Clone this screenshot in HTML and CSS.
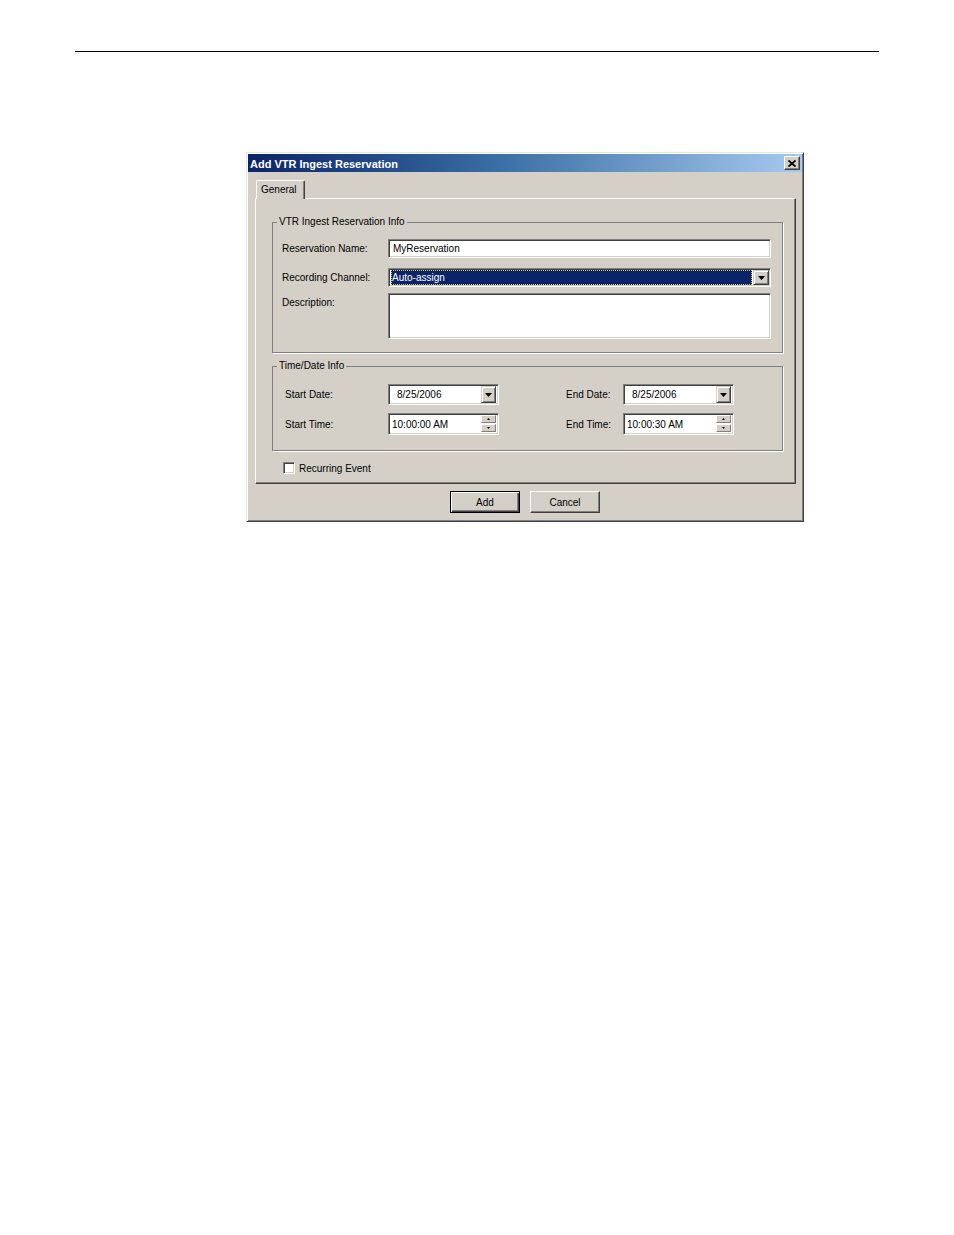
FILE: index.html
```html
<!DOCTYPE html>
<html>
<head>
<meta charset="utf-8">
<title>Add VTR Ingest Reservation</title>
<link rel="stylesheet" href="styles.css">
</head>
<body>
<div class="page">
  <div class="rule"></div>
  <div class="dialog">
    <div class="titlebar">
      <span class="title">Add VTR Ingest Reservation</span>
      <span class="close-btn"><svg width="8" height="7" viewBox="0 0 8 7"><path d="M0.5 0.5L7.5 6.5M7.5 0.5L0.5 6.5" stroke="#000" stroke-width="1.7" fill="none"/></svg></span>
    </div>
    <div class="tabs"><div class="tab">General</div></div>
    <div class="panel">
      <fieldset class="group g1">
        <legend>VTR Ingest Reservation Info</legend>
        <div class="group-body g1-body">
          <div class="row r1">
            <span class="lbl">Reservation Name:</span>
            <div class="field wide"><span class="val">MyReservation</span></div>
          </div>
          <div class="row r2">
            <span class="lbl">Recording Channel:</span>
            <div class="field wide combo">
              <span class="sel">Auto-assign</span>
              <span class="dd-btn"><svg width="7" height="4" viewBox="0 0 7 4"><path d="M0 0H7L3.5 4Z" fill="#000"/></svg></span>
            </div>
          </div>
          <div class="row r3">
            <span class="lbl">Description:</span>
            <div class="field wide area"></div>
          </div>
        </div>
      </fieldset>
      <fieldset class="group g2">
        <legend>Time/Date Info</legend>
        <div class="group-body g2-body">
          <span class="lbl">Start Date:</span>
          <div class="field small date"><span class="val">8/25/2006</span><span class="dd-btn"><svg width="7" height="4" viewBox="0 0 7 4"><path d="M0 0H7L3.5 4Z" fill="#000"/></svg></span></div>
          <span></span>
          <span class="lbl">End Date:</span>
          <div class="field small date"><span class="val">8/25/2006</span><span class="dd-btn"><svg width="7" height="4" viewBox="0 0 7 4"><path d="M0 0H7L3.5 4Z" fill="#000"/></svg></span></div>

          <span class="lbl">Start Time:</span>
          <div class="field small time"><span class="val">10:00:00 AM</span><span class="spin"><span class="spin-btn"><svg width="3" height="2" viewBox="0 0 3 2"><path d="M0 2H3L1.5 0Z" fill="#000"/></svg></span><span class="spin-btn"><svg width="3" height="2" viewBox="0 0 3 2"><path d="M0 0H3L1.5 2Z" fill="#000"/></svg></span></span></div>
          <span></span>
          <span class="lbl">End Time:</span>
          <div class="field small time"><span class="val">10:00:30 AM</span><span class="spin"><span class="spin-btn"><svg width="3" height="2" viewBox="0 0 3 2"><path d="M0 2H3L1.5 0Z" fill="#000"/></svg></span><span class="spin-btn"><svg width="3" height="2" viewBox="0 0 3 2"><path d="M0 0H3L1.5 2Z" fill="#000"/></svg></span></span></div>
        </div>
      </fieldset>
      <div class="check-row"><span class="checkbox"></span><span class="check-lbl">Recurring Event</span></div>
    </div>
    <div class="buttons">
      <div class="btn default">Add</div>
      <div class="btn">Cancel</div>
    </div>
  </div>
</div>
</body>
</html>
```
FILE: styles.css
```css
* { box-sizing: border-box; }
html, body { margin: 0; padding: 0; background: #fff; }
body {
  font-family: "Liberation Sans", Arial, sans-serif;
  font-size: 10px;
  color: #000;
}
.page { padding-top: 51px; }
.rule {
  margin-left: 75px;
  width: 804px;
  height: 1px;
  background: #000;
}
.dialog {
  margin-top: 100px;
  margin-left: 246px;
  width: 558px;
  height: 370px;
  background: #d4d0c8;
  border: 1px solid;
  border-color: #e8e6e1 #404040 #404040 #e8e6e1;
  box-shadow: inset 1px 1px 0 #fff, inset -1px -1px 0 #808080;
  padding: 1px;
}
.titlebar {
  height: 18px;
  display: flex;
  align-items: center;
  justify-content: space-between;
  padding: 0 2px 0 2px;
  background: linear-gradient(to right, #0a246a 0%, #3a6ea5 45%, #a6caf0 100%);
}
.title {
  color: #fff;
  font-weight: bold;
  font-size: 11px;
  line-height: 18px;
  padding-top: 1px;
  white-space: nowrap;
}
.close-btn {
  width: 16px;
  height: 14px;
  background: #d4d0c8;
  border: 1px solid;
  border-color: #fff #404040 #404040 #fff;
  box-shadow: inset -1px -1px 0 #808080;
  display: flex;
  align-items: center;
  justify-content: center;
}
.close-btn svg { display: block; }
.tabs {
  margin-top: 8px;
  margin-left: 7px;
  height: 18px;
  display: flex;
}
.tab {
  position: relative;
  z-index: 1;
  margin-left: 1px;
  width: 49px;
  height: 19px;
  background: #d4d0c8;
  border-top: 1px solid #fff;
  border-left: 1px solid #fff;
  border-right: 1px solid #404040;
  border-radius: 2px 2px 0 0;
  box-shadow: inset -1px 0 0 #808080;
  padding-left: 4px;
  line-height: 17px;
}
.panel {
  margin-left: 7px;
  width: 541px;
  height: 286px;
  border: 1px solid;
  border-color: #fff #404040 #404040 #fff;
  box-shadow: inset -1px -1px 0 #808080;
  padding-top: 17px;
}
.group {
  margin: 0 0 0 16px;
  padding: 0;
  min-width: 0;
  width: 511px;
  border: 1px solid #808080;
  box-shadow: 1px 1px 0 #fff;
}
.group legend {
  margin-left: 4px;
  padding: 0 2px;
  line-height: 12px;
  font-size: 10px;
}
.g1-body {
  padding: 11px 0 13px 9px;
}
.row {
  display: flex;
  align-items: flex-start;
}
.row .lbl {
  width: 106px;
  line-height: 19px;
}
.r2 { margin-top: 10px; }
.r3 { margin-top: 6px; }
.field {
  background: #fff;
  border: 1px solid;
  border-color: #808080 #fff #fff #808080;
  box-shadow: inset 1px 1px 0 #404040, inset -1px -1px 0 #d4d0c8;
  display: flex;
  align-items: center;
}
.field.wide { width: 383px; height: 19px; }
.field .val { padding-left: 4px; line-height: 15px; flex: 1; white-space: nowrap; }
.field.area { height: 46px; }
.combo { padding: 2px 1px 2px 2px; }
.combo .sel {
  flex: 1;
  height: 15px;
  background: #0a246a;
  color: #fff;
  outline: 1px dotted #e0c060;
  outline-offset: -1px;
  line-height: 16px;
  padding-left: 1px;
  margin-right: 1px;
}
.dd-btn {
  width: 16px;
  height: 15px;
  background: #d4d0c8;
  border: 1px solid;
  border-color: #d4d0c8 #404040 #404040 #d4d0c8;
  box-shadow: inset 1px 1px 0 #fff, inset -1px -1px 0 #808080;
  display: flex;
  align-items: center;
  justify-content: center;
  flex: none;
}
.dd-btn svg, .spin-btn svg { display: block; }
.g2 { margin-top: 7px; }
.g2-body {
  padding: 12px 0 15px 12px;
  display: grid;
  grid-template-columns: 103px 111px 67px 57px 111px;
  grid-template-rows: 21px 22px;
  row-gap: 8px;
  align-items: center;
}
.field.small { width: 111px; height: 100%; padding: 2px; }
.field.date .val { padding-left: 6px; }
.field.date .dd-btn { height: 17px; width: 15px; }
.field.time .val { padding-left: 1px; }
.spin {
  display: flex;
  flex-direction: column;
  justify-content: space-between;
  width: 15px;
  height: 18px;
  padding: 0 0 1px;
  flex: none;
}
.spin-btn {
  height: 8px;
  background: #d4d0c8;
  border: 1px solid;
  border-color: #fff #808080 #808080 #fff;
  display: flex;
  align-items: center;
  justify-content: center;
}
.check-row {
  margin-top: 10px;
  padding-left: 27px;
  display: flex;
  align-items: center;
  height: 14px;
}
.checkbox {
  width: 12px;
  height: 12px;
  background: #fff;
  border: 1px solid;
  border-color: #808080 #fff #fff #808080;
  box-shadow: inset 1px 1px 0 #404040, inset -1px -1px 0 #d4d0c8;
}
.check-lbl { margin-left: 4px; line-height: 14px; padding-top: 1px; }
.buttons {
  margin-top: 7px;
  display: flex;
  justify-content: center;
  gap: 10px;
}
.btn {
  width: 70px;
  height: 22px;
  line-height: 21px;
  text-align: center;
  background: #d4d0c8;
  border: 1px solid;
  border-color: #fff #404040 #404040 #fff;
  box-shadow: inset -1px -1px 0 #808080;
}
.btn.default {
  border-color: #000;
  box-shadow: inset 1px 1px 0 #fff, inset -1px -1px 0 #404040, inset -2px -2px 0 #808080;
}
```
